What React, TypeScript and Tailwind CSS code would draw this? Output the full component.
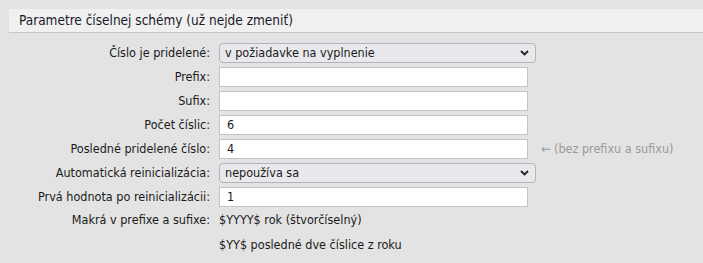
import React from "react";

const font = { fontFamily: '"DejaVu Sans Condensed", "DejaVu Sans", sans-serif' };

function Chevron() {
  return (
    <svg width="9" height="6" viewBox="0 0 9 6" className="block">
      <path d="M1 1 L4.5 4.5 L8 1" fill="none" stroke="#222" strokeWidth="1.8" />
    </svg>
  );
}

function Select({ value }: { value: string }) {
  return (
    <div className="h-[20px] w-[317px] rounded-[4px] border border-[#b4b4b8] bg-[#e9e9ed] flex items-center justify-between pl-[5px] pr-[6px] text-[12.5px] text-[#1a1a1a]">
      <span>{value}</span>
      <Chevron />
    </div>
  );
}

function Input({ value }: { value?: string }) {
  return (
    <div className="h-[20px] w-[309px] border border-[#c4c4c4] bg-white flex items-center pl-[7px] text-[12.5px] text-[#1a1a1a]">
      {value}
    </div>
  );
}

function Label({ children }: { children: React.ReactNode }) {
  return <div className="h-[20px] flex items-center justify-end text-[12.5px] text-[#1a1a1a] whitespace-nowrap">{children}</div>;
}

export default function App() {
  return (
    <div className="w-[703px] h-[263px] bg-[#e3e3e3] pt-[9px] overflow-hidden" style={font}>
      <div className="ml-[9px] h-[24px] bg-[#f0f0f0] border-b border-[#c6c6c6] flex items-center pl-[10px] text-[13.5px] text-[#1a1a2a]">
        Parametre číselnej schémy (už nejde zmeniť)
      </div>
      <div className="mt-[10px] grid grid-cols-[210px_1fr] gap-x-[9px] gap-y-[4px]">
        <Label>Číslo je pridelené:</Label>
        <div><Select value="v požiadavke na vyplnenie" /></div>
        <Label>Prefix:</Label>
        <div><Input /></div>
        <Label>Sufix:</Label>
        <div><Input /></div>
        <Label>Počet číslic:</Label>
        <div><Input value="6" /></div>
        <Label>Posledné pridelené číslo:</Label>
        <div className="flex items-center">
          <Input value="4" />
          <span className="ml-[13px] text-[12.5px] text-[#999999]">← (bez prefixu a sufixu)</span>
        </div>
        <Label>Automatická reinicializácia:</Label>
        <div><Select value="nepoužíva sa" /></div>
        <Label>Prvá hodnota po reinicializácii:</Label>
        <div><Input value="1" /></div>
        <div className="h-[18px] flex items-center justify-end text-[12.5px] text-[#1a1a1a] whitespace-nowrap">Makrá v prefixe a sufixe:</div>
        <div className="flex flex-col text-[12.5px] text-[#1a1a1a]">
          <div className="h-[18px] flex items-center">$YYYY$ rok (štvorčíselný)</div>
          <div className="mt-[7px] h-[18px] flex items-center">$YY$ posledné dve číslice z roku</div>
        </div>
      </div>
    </div>
  );
}
